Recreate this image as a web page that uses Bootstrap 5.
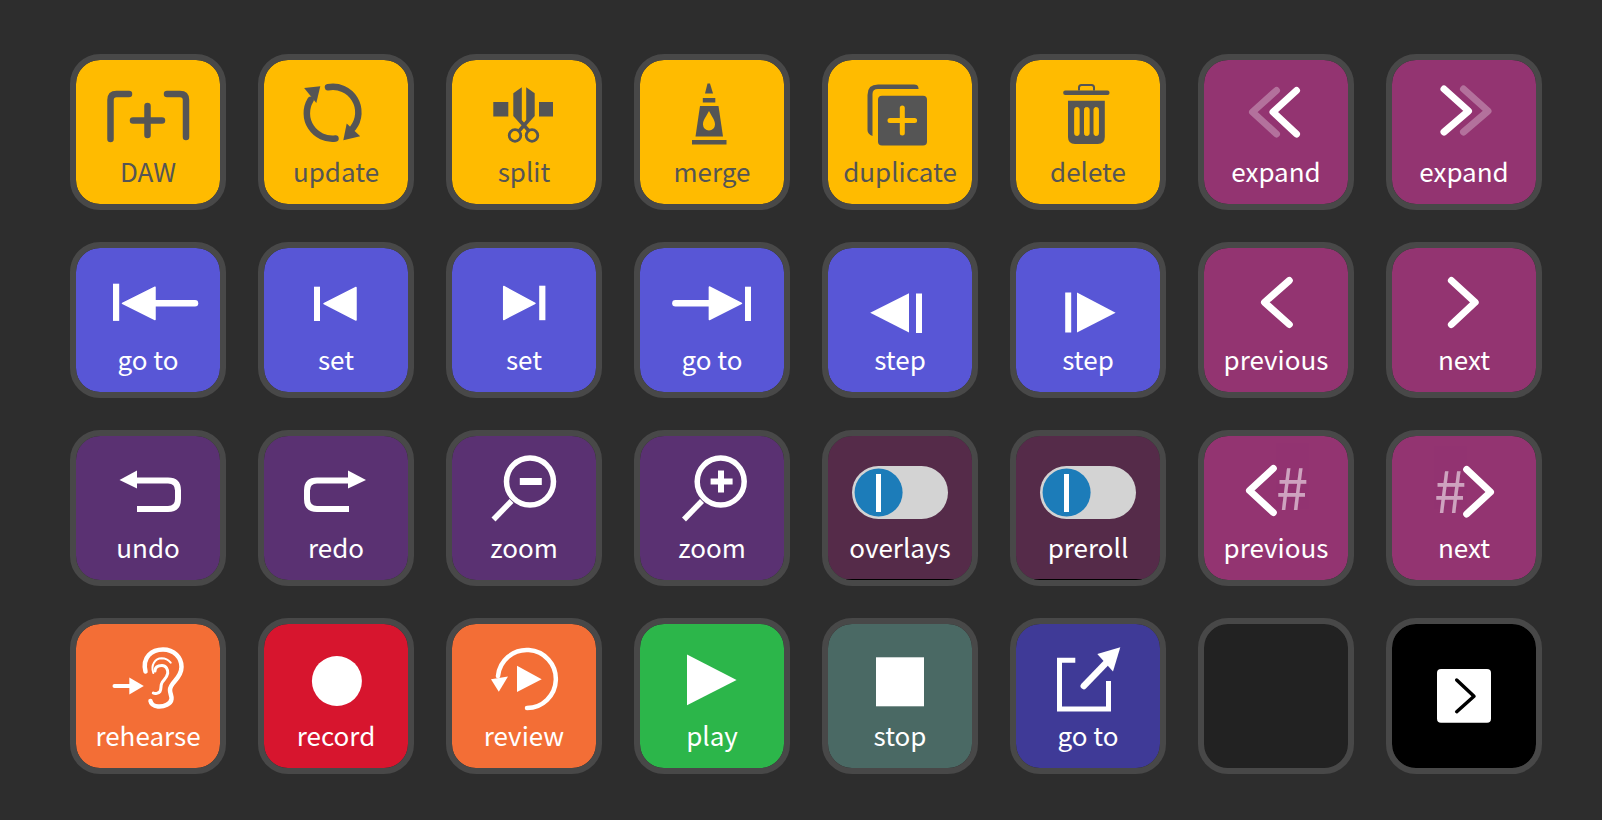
<!DOCTYPE html>
<html lang="en">
<head>
<meta charset="utf-8">
<title>Deck</title>
<link href="https://cdn.jsdelivr.net/npm/bootstrap@5.3.0/dist/css/bootstrap.min.css" rel="stylesheet">
<style>
body{background:#2d2d2d;font-family:"Noto Sans CJK SC","Noto Sans",sans-serif;overflow:hidden}
.deck{display:grid;grid-template-columns:repeat(8,156px);grid-auto-rows:156px;gap:32px;padding:54px 0 0 70px}
.pad{border:6px solid #484848;border-radius:30px;color:#fff;position:relative;background-clip:padding-box;overflow:hidden}
.pad svg{display:block;width:144px;height:95px;overflow:visible;fill:#fff;stroke:#fff}
.pad svg .ln{fill:none;stroke-width:6.5;stroke-linecap:round;stroke-linejoin:round}
.pad svg .chev{stroke-width:7}
.pad svg .nb{stroke:none}
.pad svg .tri{stroke-width:1.5;stroke-linejoin:round}
.pad svg .fnt{opacity:.3}
.pad svg .hash{font-family:"Noto Sans CJK SC","Noto Sans",sans-serif;font-size:58px;font-weight:400;stroke:none;opacity:.55}
.lbl{font-size:26px;font-weight:400;line-height:32px;text-align:center}
.sw::after{content:"";position:absolute;left:18px;right:18px;bottom:0;height:1px;background:#000}
.c-yl{background-color:#ffbb00;color:#555}
.c-yl svg{fill:#555;stroke:#555}
.c-yl svg .cut{fill:#ffbb00;stroke:#ffbb00}
.c-bl{background-color:#5856d6}
.c-pu{background-color:#5a3172}
.c-mg{background-color:#933471}
.c-sw{background-color:#552b49}
.c-or{background-color:#f36e36}
.c-rd{background-color:#d7152e}
.c-gr{background-color:#2cb64a}
.c-st{background-color:#4a6964}
.c-in{background-color:#3f3a97}
.c-em{background-color:#222}
.c-bk{background-color:#000}
</style>
</head>
<body>
<div class="deck">

<div class="pad c-yl"><svg viewBox="0 0 144 95"><path class="ln" d="M34.500 79V40Q34.500 34 40.500 34H53M91 34H104Q110 34 110 40V77"/><path class="ln" d="M57 60.500H86M71.500 46V75"/></svg><div class="lbl">DAW</div></div>

<div class="pad c-yl"><svg viewBox="0 0 144 95"><path class="ln" d="M64 27.300A25.500 25.500 0 0 1 89 68"/><path class="nb" d="M82.700 63.400L79.300 80.300L96.200 76.300Z"/><path class="ln" d="M71.500 78.500A25.500 25.500 0 0 1 46.500 40"/><path class="nb" d="M40.100 27.900L56.300 26.200L52.300 43.100Z"/></svg><div class="lbl">update</div></div>

<div class="pad c-yl"><svg viewBox="0 0 144 95"><rect class="nb" x="41.300" y="42" width="15" height="14.500"/><rect class="nb" x="87" y="42" width="14" height="14.500"/><path class="nb" d="M69.800 27.300L61.300 33.300V56L75.500 72L78 69.500L69.800 60Z"/><path class="nb" d="M74.200 27.300L82.700 33.300V56L68.500 72L66 69.500L74.200 60Z"/><circle cx="63" cy="75.500" r="5.800" fill="none" stroke-width="2.800"/><circle cx="80" cy="75.500" r="5.800" fill="none" stroke-width="2.800"/></svg><div class="lbl">split</div></div>

<div class="pad c-yl"><svg viewBox="0 0 144 95"><path class="nb" d="M67.500 23.500H70L73 33.500H65Z"/><rect class="nb" x="62.800" y="38" width="12.500" height="4.500"/><path class="nb" d="M60 46H78.500L83 76.500H55.500Z"/><rect class="nb" x="52" y="80" width="34.500" height="4.500"/><path class="cut" stroke-width="0" d="M69 51C72 57 75 60 75 64.500A6 6 0 0 1 63 64.500C63 60 66 57 69 51Z"/></svg><div class="lbl">merge</div></div>

<div class="pad c-yl"><svg viewBox="0 0 144 95"><path class="nb" d="M90.500 29V28Q90 24.600 86 24.600H50Q39.500 24.600 39.500 35V70Q39.500 74 44.500 76V34Q44.500 29 50 29Z"/><rect class="nb" x="50" y="35.700" width="49" height="49.700" rx="4"/><path class="ln cut" style="stroke-width:5" d="M62 60.400H86.600M74.300 48V73"/></svg><div class="lbl">duplicate</div></div>

<div class="pad c-yl"><svg viewBox="0 0 144 95"><rect class="nb" x="47.200" y="30.600" width="46.300" height="4.500" rx="2"/><path d="M63 30.600V27.500Q63 25 65.500 25H75.500Q78 25 78 27.500V30.600" fill="none" stroke-width="2"/><path class="nb" d="M52 40.800H88.800V77Q88.800 84 81.800 84H59Q52 84 52 77Z"/><rect class="nb cut" x="58.700" y="47.500" width="4.400" height="28" rx="2"/><rect class="nb cut" x="68.500" y="47.500" width="4.600" height="28" rx="2"/><rect class="nb cut" x="78" y="47.500" width="4.400" height="28" rx="2"/></svg><div class="lbl">delete</div></div>

<div class="pad c-mg"><svg viewBox="0 0 144 95"><path class="ln chev fnt" d="M72.500 30.500L48.500 52L72.500 74"/><path class="ln chev" d="M92.500 30.500L69 52L92.500 74"/></svg><div class="lbl">expand</div></div>

<div class="pad c-mg"><svg viewBox="0 0 144 95"><path class="ln chev fnt" d="M71.500 29L96 51L71.500 72"/><path class="ln chev" d="M52 29L76.500 51L52 72"/></svg><div class="lbl">expand</div></div>

<div class="pad c-bl"><svg viewBox="0 0 144 95"><rect class="nb" x="37" y="35.700" width="6.200" height="37.200"/><path class="tri" d="M46.500 55.300L79 39.200V71.500Z"/><path class="ln" d="M75 55.300H119"/></svg><div class="lbl">go to</div></div>

<div class="pad c-bl"><svg viewBox="0 0 144 95"><rect class="nb" x="50" y="38.700" width="6" height="34.300"/><path class="tri" d="M60 55.600L92 39.500V72Z"/></svg><div class="lbl">set</div></div>

<div class="pad c-bl"><svg viewBox="0 0 144 95"><path class="tri" d="M51.700 38.500V71.500L83 55.300Z"/><rect class="nb" x="87.200" y="37.700" width="6.200" height="34.500"/></svg><div class="lbl">set</div></div>

<div class="pad c-bl"><svg viewBox="0 0 144 95"><path class="ln" d="M35.400 55.300H72"/><path class="tri" d="M69.400 39V71.500L101.500 55.300Z"/><rect class="nb" x="105" y="38.700" width="6" height="34.300"/></svg><div class="lbl">go to</div></div>

<div class="pad c-bl"><svg viewBox="0 0 144 95"><path class="nb" d="M42.200 64.800L81 45.200V84.400Z"/><rect class="nb" x="88" y="45.500" width="6" height="39.500"/></svg><div class="lbl">step</div></div>

<div class="pad c-bl"><svg viewBox="0 0 144 95"><rect class="nb" x="49.200" y="44.500" width="6" height="40"/><path class="nb" d="M61 44.500V84.400L99.600 64.800Z"/></svg><div class="lbl">step</div></div>

<div class="pad c-mg"><svg viewBox="0 0 144 95"><path class="ln chev" d="M85.300 32.500L60.500 54.300L85.300 76.500"/></svg><div class="lbl">previous</div></div>

<div class="pad c-mg"><svg viewBox="0 0 144 95"><path class="ln chev" d="M59.400 32.500L83.200 54.300L59.400 76.500"/></svg><div class="lbl">next</div></div>

<div class="pad c-pu"><svg viewBox="0 0 144 95"><path class="nb" d="M43.500 44.100L61 34.600V52.600Z"/><path class="ln" style="stroke-linecap:butt;stroke-width:6" d="M60 44.500H92Q102 44.500 102 54.500V63Q102 73 92 73H61"/></svg><div class="lbl">undo</div></div>

<div class="pad c-pu"><svg viewBox="0 0 144 95"><path class="nb" d="M102 44.100L84 34.600V52.600Z"/><path class="ln" style="stroke-linecap:butt;stroke-width:6" d="M85 44.500H53Q43 44.500 43 54.500V63Q43 73 53 73H85"/></svg><div class="lbl">redo</div></div>

<div class="pad c-pu"><svg viewBox="0 0 144 95"><circle cx="78" cy="45.500" r="23.500" fill="none" stroke-width="5.500"/><path d="M59.500 65L41.500 83.500" stroke-width="5.500" fill="none"/><rect class="nb" x="67.800" y="42" width="22" height="7"/></svg><div class="lbl">zoom</div></div>

<div class="pad c-pu"><svg viewBox="0 0 144 95"><circle cx="80.700" cy="45.500" r="23.500" fill="none" stroke-width="5.500"/><path d="M62 65L44 83.500" stroke-width="5.500" fill="none"/><path class="nb" d="M78 34.600H84V42.500H92.600V48.500H84V56.600H78V48.500H70.600V42.500H78Z"/></svg><div class="lbl">zoom</div></div>

<div class="pad c-sw sw"><svg viewBox="0 0 144 95"><rect class="nb" x="24" y="30" width="96" height="53" rx="26.500" style="fill:#d3d3d3"/><circle class="nb" cx="50.600" cy="56.500" r="24" style="fill:#1c7cb9"/><rect class="nb" x="48" y="38" width="5" height="38"/></svg><div class="lbl">overlays</div></div>

<div class="pad c-sw sw"><svg viewBox="0 0 144 95"><rect class="nb" x="24" y="30" width="96" height="53" rx="26.500" style="fill:#d3d3d3"/><circle class="nb" cx="50.600" cy="56.500" r="24" style="fill:#1c7cb9"/><rect class="nb" x="48" y="38" width="5" height="38"/></svg><div class="lbl">preroll</div></div>

<div class="pad c-mg"><svg viewBox="0 0 144 95"><path class="ln chev" d="M69.300 32.500L45.500 54.500L69.300 76.500"/><text class="hash" x="72" y="74">#</text></svg><div class="lbl">previous</div></div>

<div class="pad c-mg"><svg viewBox="0 0 144 95"><text class="hash" x="42" y="77">#</text><path class="ln chev" d="M74.700 33.500L98.500 56L74.700 78"/></svg><div class="lbl">next</div></div>

<div class="pad c-or"><svg viewBox="0 0 144 95"><path class="ln" style="stroke-width:4" d="M38.500 62H55"/><path class="nb" d="M53.300 53.600V70.500L67.800 62Z"/><path class="ln" style="stroke-width:4.500" d="M69.500 47.500C66 33 76 25.500 87 25.500C98 25.500 105.500 33.500 105.500 43C105.500 55 94 58 94 66C94 70 96 72 95.500 75C95 80 88 83 82 82.500C78 82 75 80 74.500 77"/><path class="ln" style="stroke-width:2" d="M77.300 49C74.500 41 79 34.500 85.700 34.300C89.500 34.300 92.500 36 94.700 38.700"/><path class="ln" style="stroke-width:3" d="M79 47C79 42 83 41.500 86 41.500C90 41.500 92 45 91.700 49.300C91 54 87 56 85.700 59.300C84.500 62 85.500 65 84 67.500C82.500 69.500 79 70 77.300 69"/></svg><div class="lbl">rehearse</div></div>

<div class="pad c-rd"><svg viewBox="0 0 144 95"><circle class="nb" cx="72.900" cy="57" r="25"/></svg><div class="lbl">record</div></div>

<div class="pad c-or"><svg viewBox="0 0 144 95"><path class="ln" style="stroke-width:4.500" d="M75 84A29 29 0 1 0 46 52"/><path class="nb" d="M39 55.300L56 52.600L46.800 67.800Z"/><path class="nb" d="M65 41.800V68L89.700 55.300Z"/></svg><div class="lbl">review</div></div>

<div class="pad c-gr"><svg viewBox="0 0 144 95"><path class="nb" d="M47 30.600V81.300L96.600 56Z"/></svg><div class="lbl">play</div></div>

<div class="pad c-st"><svg viewBox="0 0 144 95"><rect class="nb" x="48" y="33.300" width="48" height="49"/></svg><div class="lbl">stop</div></div>

<div class="pad c-in"><svg viewBox="0 0 144 95"><path d="M59.300 36.200H43.500V85H92.500V57" fill="none" stroke-width="5"/><path class="ln" d="M67.800 62L89 40"/><path class="nb" d="M104.300 23.200L81.300 30L97 47.500Z"/></svg><div class="lbl">go to</div></div>

<div class="pad c-em"></div>

<div class="pad c-bk"><svg viewBox="0 0 144 95"><rect class="nb" x="45" y="45" width="54" height="53.700" rx="4"/><path class="ln" style="stroke:#000;stroke-width:3.500" d="M64.700 56L82 72.300L64.700 87.700"/></svg></div>

</div>
<script src="https://cdn.jsdelivr.net/npm/bootstrap@5.3.0/dist/js/bootstrap.bundle.min.js"></script>
</body>
</html>
